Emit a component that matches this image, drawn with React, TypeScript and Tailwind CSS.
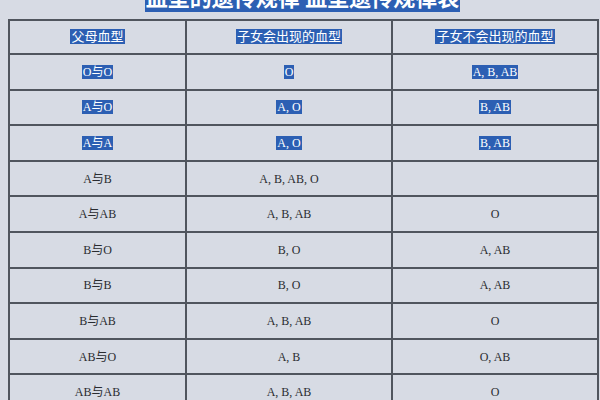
const rows: { p: string; y: string; n: string; hl?: boolean }[] = [
  { p: "O与O", y: "O", n: "A, B, AB", hl: true },
  { p: "A与O", y: "A, O", n: "B, AB", hl: true },
  { p: "A与A", y: "A, O", n: "B, AB", hl: true },
  { p: "A与B", y: "A, B, AB, O", n: "" },
  { p: "A与AB", y: "A, B, AB", n: "O" },
  { p: "B与O", y: "B, O", n: "A, AB" },
  { p: "B与B", y: "B, O", n: "A, AB" },
  { p: "B与AB", y: "A, B, AB", n: "O" },
  { p: "AB与O", y: "A, B", n: "O, AB" },
  { p: "AB与AB", y: "A, B, AB", n: "O" },
];

const Cell = ({ text, hl }: { text: string; hl?: boolean }) => (
  <td className="border-2 border-[#50555e] text-center align-middle p-0">
    {hl ? (
      <span className="bg-[#2c5fb3] text-white px-[1px]">{text}</span>
    ) : (
      <span>{text}</span>
    )}
  </td>
);

export default function App() {
  return (
    <div
      className="w-[600px] h-[400px] overflow-hidden bg-[#d7dbe4] text-[#2a2c30]"
      style={{ fontFamily: '"Liberation Serif", "Noto Sans CJK SC", serif' }}
    >
      {/* title, mostly scrolled off the top */}
      <div className="flex justify-center mt-[-14px] mb-[7px] pl-[5px]">
        <span className="inline-block h-[26px] leading-[26px] bg-[#2c5fb3] text-white text-[22px] font-bold px-[1px]">
          血型的遗传规律 血型遗传规律表
        </span>
      </div>
      <table className="ml-[8px] w-[589px] border-collapse border-2 border-[#50555e] table-fixed text-[12px]">
        <colgroup>
          <col className="w-[177px]" />
          <col className="w-[206px]" />
          <col className="w-[206px]" />
        </colgroup>
        <thead>
          <tr className="h-[34px] text-[13px]">
            <Cell text="父母血型" hl />
            <Cell text="子女会出现的血型" hl />
            <Cell text="子女不会出现的血型" hl />
          </tr>
        </thead>
        <tbody>
          {rows.map((r) => (
            <tr key={r.p} className="h-[35.6px]">
              <Cell text={r.p} hl={r.hl} />
              <Cell text={r.y} hl={r.hl} />
              <Cell text={r.n} hl={r.hl && r.n !== ""} />
            </tr>
          ))}
        </tbody>
      </table>
    </div>
  );
}
